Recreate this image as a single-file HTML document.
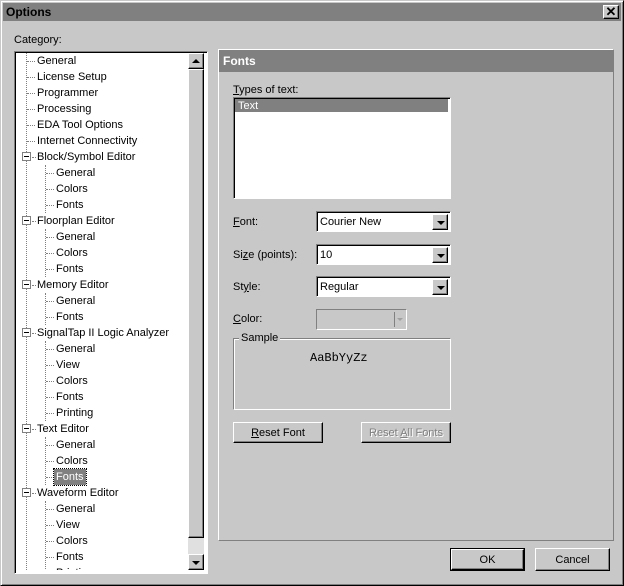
<!DOCTYPE html><html><head><style>
*{box-sizing:border-box;margin:0;padding:0}
body{width:624px;height:586px;background:#c8c8c8;font-family:"Liberation Sans",sans-serif;font-size:11px;color:#000;position:relative;overflow:hidden}
.a{position:absolute}
.raised{border:1px solid;border-color:#fff #000 #000 #fff;box-shadow:inset -1px -1px 0 #808080;background:#c8c8c8}
.sunk{border:1px solid;border-color:#808080 #fff #fff #808080;box-shadow:inset 1px 1px 0 #000}
.combo{background:#fff}
.combo .t{position:absolute;left:3px;top:4px}
.arr{position:absolute;right:2px;top:2px;width:16px;height:16px}
.arr:after{content:"";position:absolute;left:4px;top:6px;border:4px solid transparent;border-top:4px solid #000;border-bottom:0}
.row{position:absolute;height:16px;line-height:16px;white-space:nowrap}
.dh{position:absolute;border-top:1px dotted #808080;width:8px}
.dv{position:absolute;border-left:1px dotted #808080}
.pm{position:absolute;width:9px;height:9px;border:1px solid #808080;background:#fff}
.pm:after{content:"";position:absolute;left:1px;top:3px;width:5px;height:1px;background:#000}
u{text-decoration:underline}
</style></head><body>
<div class="a" style="left:0;top:0;width:624px;height:586px;border:1px solid;border-color:#c8c8c8 #000 #000 #c8c8c8;box-shadow:inset 1px 1px 0 #fff,inset -1px -1px 0 #808080"></div>
<div class="a" style="left:3px;top:3px;width:618px;height:18px;background:#808080"></div>
<div class="a" style="left:6px;top:4px;font-weight:bold;font-size:12px;line-height:16px">Options</div>
<div class="a raised" style="left:603px;top:5px;width:16px;height:14px;font-size:13px;line-height:11px;text-align:center;font-weight:bold">✕</div>
<div class="a" style="left:14px;top:34px">Category:</div>
<div class="a sunk" style="left:14px;top:51px;width:194px;height:523px;background:#fff"></div>
<div class="a" style="left:16px;top:53px;width:172px;height:517px;overflow:hidden">
<div class="dv" style="left:10px;top:0;height:517px"></div>
<div class="dv" style="left:29px;top:112px;height:48px"></div>
<div class="dv" style="left:29px;top:176px;height:48px"></div>
<div class="dv" style="left:29px;top:240px;height:32px"></div>
<div class="dv" style="left:29px;top:288px;height:80px"></div>
<div class="dv" style="left:29px;top:384px;height:48px"></div>
<div class="dv" style="left:29px;top:448px;height:80px"></div>
<div id="tree"></div>
</div>
<script>
var items=[[1,"General"],[1,"License Setup"],[1,"Programmer"],[1,"Processing"],[1,"EDA Tool Options"],[1,"Internet Connectivity"],[0,"Block/Symbol Editor"],[2,"General"],[2,"Colors"],[2,"Fonts"],[0,"Floorplan Editor"],[2,"General"],[2,"Colors"],[2,"Fonts"],[0,"Memory Editor"],[2,"General"],[2,"Fonts"],[0,"SignalTap II Logic Analyzer"],[2,"General"],[2,"View"],[2,"Colors"],[2,"Fonts"],[2,"Printing"],[0,"Text Editor"],[2,"General"],[2,"Colors"],[2,"Fonts"],[0,"Waveform Editor"],[2,"General"],[2,"View"],[2,"Colors"],[2,"Fonts"],[2,"Printing"]];
var h="";items.forEach(function(it,i){var y=i*16;
if(it[0]==0){h+='<div class="pm" style="left:6px;top:'+(y+3)+'px"></div><div class="dh" style="left:16px;top:'+(y+8)+'px;width:4px"></div><div class="row" style="left:21px;top:'+y+'px">'+it[1]+'</div>';}
else if(it[0]==1){h+='<div class="dh" style="left:11px;top:'+(y+8)+'px"></div><div class="row" style="left:21px;top:'+y+'px">'+it[1]+'</div>';}
else{var sel=(i==26);h+='<div class="dh" style="left:30px;top:'+(y+8)+'px"></div><div class="row" style="left:'+(sel?38:40)+'px;top:'+y+'px;'+(sel?'background:#808080;color:#fff;padding:0 2px;outline:1px dotted #000':'')+'">'+it[1]+'</div>';}
});document.getElementById("tree").innerHTML=h;
</script>
<div class="a" style="left:188px;top:53px;width:16px;height:517px;background:#e0e0e0"></div>
<div class="a raised" style="left:188px;top:53px;width:16px;height:16px"><div class="a" style="left:3px;top:5px;border:4px solid transparent;border-bottom:4px solid #000;border-top:0"></div></div>
<div class="a raised" style="left:188px;top:69px;width:16px;height:469px"></div>
<div class="a raised" style="left:188px;top:554px;width:16px;height:16px"><div class="a" style="left:3px;top:6px;border:4px solid transparent;border-top:4px solid #000;border-bottom:0"></div></div>
<div class="a" style="left:218px;top:49px;width:396px;height:492px;border:1px solid;border-color:#fff #808080 #808080 #fff"></div>
<div class="a" style="left:219px;top:50px;width:394px;height:22px;background:#808080;color:#fff;font-weight:bold;font-size:12px;line-height:23px;padding-left:4px">Fonts</div>
<div class="a" style="left:233px;top:84px"><u>T</u>ypes of text:</div>
<div class="a sunk" style="left:233px;top:97px;width:218px;height:102px;background:#fff"></div>
<div class="a" style="left:235px;top:99px;width:213px;height:13px;background:#808080;color:#fff;line-height:14px;padding-left:3px">Text</div>
<div class="a" style="left:233px;top:216px"><u>F</u>ont:</div>
<div class="a sunk combo" style="left:316px;top:211px;width:135px;height:21px"><span class="t">Courier New</span><div class="arr raised"></div></div>
<div class="a" style="left:233px;top:249px">Si<u>z</u>e (points):</div>
<div class="a sunk combo" style="left:316px;top:244px;width:135px;height:21px"><span class="t">10</span><div class="arr raised"></div></div>
<div class="a" style="left:233px;top:281px">St<u>y</u>le:</div>
<div class="a sunk combo" style="left:316px;top:276px;width:135px;height:21px"><span class="t">Regular</span><div class="arr raised"></div></div>
<div class="a" style="left:233px;top:313px"><u>C</u>olor:</div>
<div class="a sunk" style="left:316px;top:309px;width:91px;height:21px;box-shadow:none"><div class="a" style="left:77px;top:2px;height:15px;border-left:1px solid #808080"></div><div class="a" style="left:80px;top:8px;border:3px solid transparent;border-top:3px solid #a0a0a0;border-bottom:0"></div></div>
<div class="a" style="left:233px;top:338px;width:218px;height:72px;border:1px solid;border-color:#808080 #fff #fff #808080;box-shadow:inset 1px 1px 0 #fff,1px 1px 0 #808080 inset"></div>
<div class="a" style="left:239px;top:332px;background:#c8c8c8;padding:0 2px">Sample</div>
<div class="a" style="left:310px;top:351px;font-family:'Liberation Mono',monospace;font-size:12px">AaBbYyZz</div>
<div class="a raised" style="left:233px;top:422px;width:90px;height:21px;text-align:center;line-height:20px"><u>R</u>eset Font</div>
<div class="a raised" style="left:361px;top:422px;width:90px;height:21px;text-align:center;line-height:20px;color:#808080;text-shadow:1px 1px 0 #fff">Reset <u>A</u>ll Fonts</div>
<div class="a" style="left:450px;top:548px;width:75px;height:23px;border:1px solid #000"><div class="raised" style="width:73px;height:21px;text-align:center;line-height:20px">OK</div></div>
<div class="a raised" style="left:535px;top:548px;width:75px;height:23px;text-align:center;line-height:22px">Cancel</div>
</body></html>
